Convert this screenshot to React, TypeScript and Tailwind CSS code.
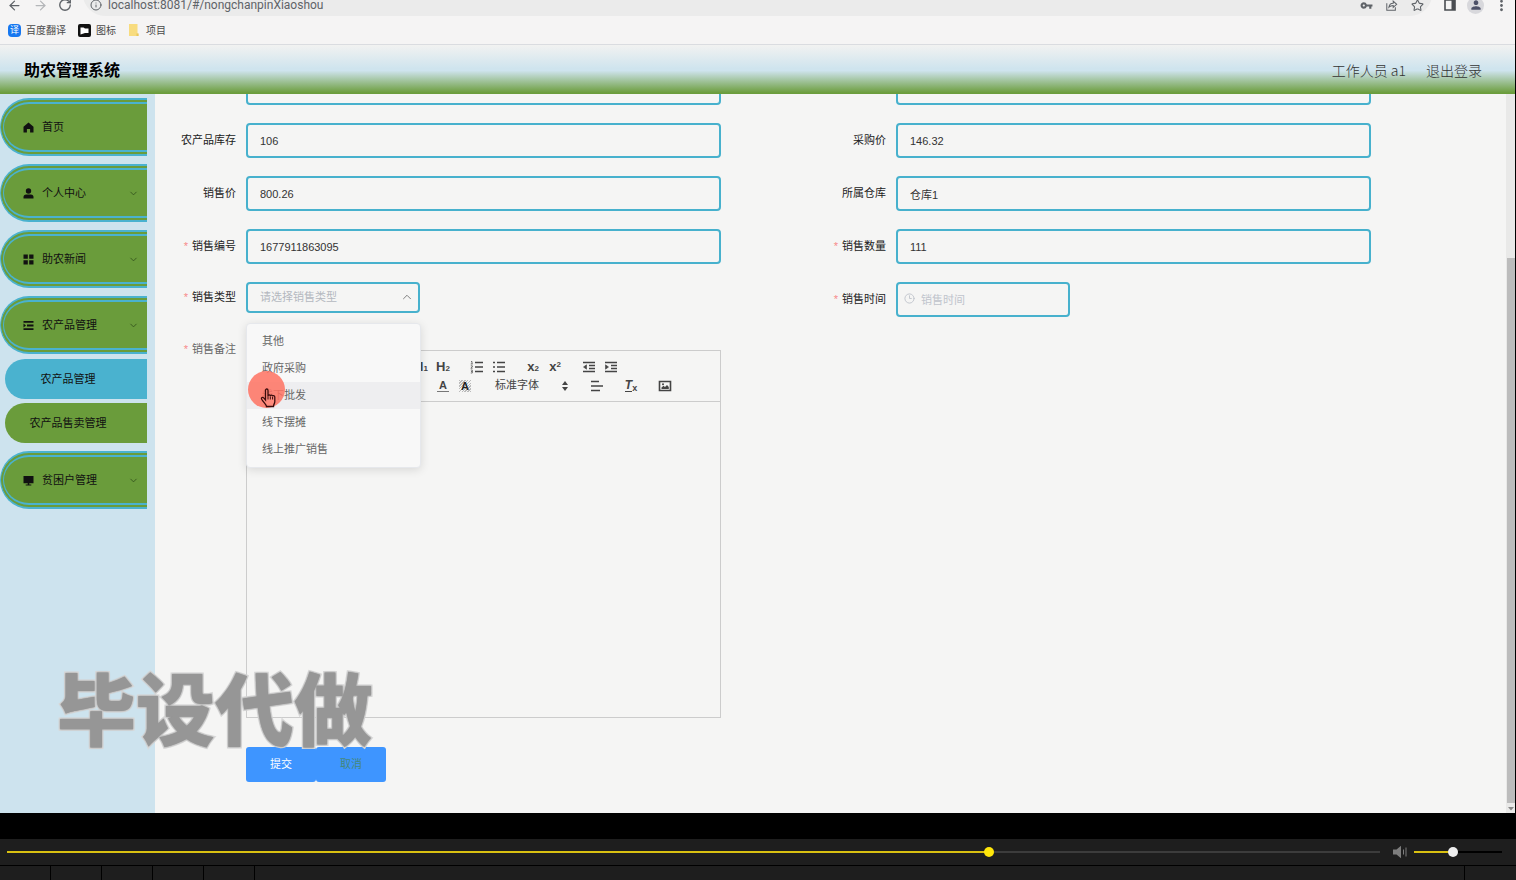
import { useState } from 'react'
import type { ReactNode } from 'react'
import { ArrowLeft, ArrowRight, ChevronDown, ChevronUp, Clock3, Info, RotateCw, Star } from 'lucide-react'
import { MdMoreVert, MdPerson, MdVpnKey } from 'react-icons/md'

const saleTypes = ['其他', '政府采购', '线下批发', '线下摆摊', '线上推广销售']

const inputClass =
  'h-[35px] w-full min-w-0 rounded border-2 border-[#47b1cd] bg-transparent px-3 text-[11px] text-[#333] outline-none placeholder:text-[#c0c4cc]'

function BrowserBar() {
  return (
    <div className="border-b border-[#dadce0] bg-[#f5f4f4] text-[#5f6368]">
      <div className="-mt-[6px] flex h-[22px] items-center">
        <button aria-label="后退" className="ml-[7px]" type="button">
          <ArrowLeft size={15} />
        </button>
        <button aria-label="前进" className="ml-[11px] text-[#b4b6b9]" type="button">
          <ArrowRight size={15} />
        </button>
        <button aria-label="刷新" className="ml-[10px]" type="button">
          <RotateCw size={14} strokeWidth={2.4} />
        </button>
        <div className="ml-[11px] flex h-[22px] flex-1 items-center rounded-b-full bg-[#ebebeb] pr-2 pl-[7px]">
          <Info size={12} />
          <input
            aria-label="地址"
            className="ml-[6px] min-w-0 flex-1 bg-transparent font-[Roboto,sans-serif] text-[12px] outline-none"
            defaultValue="localhost:8081/#/nongchanpinXiaoshou"
          />
          <MdVpnKey className="mr-3" size={13} />
          <svg className="mr-[13px]" fill="none" height="12" stroke="currentColor" strokeWidth="1.2" viewBox="0 0 14 14" width="13">
            <path d="M1.500 5v8h10V9.500M4 9.500c.5-3 2-4.500 5-4.500V2.500l4 3.700-4 3.500V7.500c-2 0-3.500.5-5 2z" />
          </svg>
          <Star size={13} />
        </div>
        <svg className="ml-3 text-[#4a4d51]" height="12" viewBox="0 0 12 12" width="12">
          <path d="M1 1h10v10H1z" fill="none" stroke="currentColor" strokeWidth="1.600" />
          <path d="M7.500 1H11v10H7.500z" fill="currentColor" />
        </svg>
        <span className="ml-[11px] grid size-[17px] place-items-center rounded-full bg-[#d8d8dc] text-[#4d5168]">
          <MdPerson size={14} />
        </span>
        <MdMoreVert className="mr-[5px] ml-[9px]" size={17} />
      </div>
      <div className="flex h-7 items-center px-2 text-[10px] text-[#4a4a4a]">
        <span className="grid size-[13px] place-items-center rounded-sm bg-[#1677f0] text-[9px] leading-none text-white">译</span>
        <a className="ml-[5px]" href="#fanyi">
          百度翻译
        </a>
        <svg className="ml-3" height="13" viewBox="0 0 13 13" width="13">
          <rect fill="#111" height="13" rx="2" width="13" />
          <path d="M2.500 3.500h3l1.500 1h3.500V9H7l-4.500 1.500z" fill="#fff" />
        </svg>
        <a className="ml-[5px]" href="#tubiao">
          图标
        </a>
        <svg className="ml-3" height="12" viewBox="0 0 11 12" width="11">
          <path d="M1 0h8.500v9.500h1V12H1z" fill="#f8dc7f" />
          <path d="M8.500 9.500h2V12h-2z" fill="#e9c65d" />
        </svg>
        <a className="ml-[7px]" href="#xiangmu">
          项目
        </a>
      </div>
    </div>
  )
}

function MenuIcon({ name }: { name: string }) {
  return (
    <svg className="shrink-0" fill="currentColor" height="11" viewBox="0 0 11 11" width="11">
      {name === 'home' && <path d="M5.500.5L.5 4.800V10.500h3.400V7h3.200v3.500h3.400V4.800z" />}
      {name === 'user' && (
        <>
          <circle cx="5.500" cy="3" r="2.700" />
          <path d="M.5 10.500V9c0-1.600 1-2.600 2.600-2.600h4.800c1.600 0 2.600 1 2.600 2.600v1.500z" />
        </>
      )}
      {name === 'grid' && <path d="M.5.5h4.300v4.300H.5zM6.200.5h4.300v4.300H6.200zM.5 6.200h4.300v4.300H.5zM6.200 6.200h4.300v4.300H6.200z" />}
      {name === 'list' && <path d="M.5 1h10v1.800H.5zM4 4.600h6.500v1.800H4zM.5 8.200h10V10H.5zM.5 3.500l2.500 2-2.500 2z" />}
      {name === 'screen' && <path d="M.5 1h10v7.200H6.300v1.300h2v1H2.700v-1h2V8.200H.5z" />}
    </svg>
  )
}

function MenuItem({ icon, label, arrow = true }: { icon: string; label: string; arrow?: boolean }) {
  return (
    <button
      className="mb-2 flex h-[58px] w-full items-center rounded-l-[29px] border-y-6 border-l-4 border-double border-[#4ab2cf] bg-[#6a9c3b] pr-2 pl-[19px] text-left text-[11px] text-[#111]"
      type="button"
    >
      <MenuIcon name={icon} />
      <span className="ml-2 flex-1">{label}</span>
      {arrow && <ChevronDown className="text-[#31501b]" size={11} strokeWidth={1.8} />}
    </button>
  )
}

function Sidebar() {
  return (
    <nav className="w-[155px] shrink-0 bg-[#cde3ee] pt-1 pr-2">
      <MenuItem arrow={false} icon="home" label="首页" />
      <MenuItem icon="user" label="个人中心" />
      <MenuItem icon="grid" label="助农新闻" />
      <MenuItem icon="list" label="农产品管理" />
      <div className="-mt-[3px] mb-2 flex flex-col gap-1 pl-[5px] text-[11px] text-[#111]">
        <a className="grid h-10 place-items-center rounded-l-[20px] bg-[#4ab2cf] pr-4" href="#nongchanpin">
          农产品管理
        </a>
        <a className="grid h-10 place-items-center rounded-l-[20px] bg-[#6a9c3b] pr-4" href="#shoumai">
          农产品售卖管理
        </a>
      </div>
      <MenuItem icon="screen" label="贫困户管理" />
    </nav>
  )
}

interface FieldProps {
  id: string
  label: string
  required?: boolean
  children: ReactNode
}

function Field({ id, label, required, children }: FieldProps) {
  return (
    <div className="flex items-center pr-[85px]">
      <label className="w-20 shrink-0 text-right text-[11px] text-[#222]" htmlFor={id}>
        {required && <span className="mr-1 text-[#f78989]">*</span>}
        {label}
      </label>
      <div className="ml-[10px] min-w-0 flex-1">{children}</div>
    </div>
  )
}

function TextField({ id, label, value, required }: { id: string; label: string; value: string; required?: boolean }) {
  return (
    <Field id={id} label={label} required={required}>
      <input className={inputClass} defaultValue={value} id={id} />
    </Field>
  )
}

function SaleTypeSelect() {
  const [value, setValue] = useState('')

  return (
    <div className="relative w-[174px]">
      <select
        className="block h-[31px] w-full appearance-none rounded border-2 border-[#47b1cd] bg-transparent px-3 text-[11px] text-[#b4b8bf] outline-none"
        id="type"
        onChange={(e) => setValue(e.target.value)}
        value={value}
      >
        <option value="">请选择销售类型</option>
        {saleTypes.map((type) => (
          <option key={type}>{type}</option>
        ))}
      </select>
      <ChevronUp className="pointer-events-none absolute top-2 right-[6px] text-[#777]" size={14} strokeWidth={1.6} />
      <ul className="absolute top-[41px] left-0 z-10 w-[175px] rounded border border-[#e6e8ec] bg-[#f8f8f8] py-1 text-[11px] text-[#666] shadow-[0_2px_10px_rgba(0,0,0,0.12)]">
        {saleTypes.map((type, index) => (
          <li key={type}>
            <button
              className={`block h-[27px] w-full px-[15px] text-left ${index === 2 ? 'bg-[#eeeef0]' : ''}`}
              onClick={() => setValue(type)}
              type="button"
            >
              {type}
            </button>
          </li>
        ))}
      </ul>
      {/* click highlight and hand pointer */}
      <span className="pointer-events-none absolute top-[89px] left-[2px] z-20 size-[37px] rounded-full bg-[#ff7262]/85" />
      <svg className="pointer-events-none absolute top-[106px] left-[14px] z-20" height="20" viewBox="0 0 17 20" width="17">
        <path
          d="M5.500 12V2.500c0-2 2.500-2 2.500 0V8c0-1.500 2.300-1.400 2.300.2 0-1.500 2.300-1.300 2.300.3 0-1.300 2.200-1 2.200.5v4.500c0 2-1.300 2.800-1.300 5H6.500c0-2-3-4-4.800-7.300-.9-1.800 1-2.400 2-1.300z"
          fill="#ff8b7d"
          stroke="#3a0c0c"
          strokeWidth="1.300"
        />
        <path d="M8 8v3.500M10.300 8.500v3M12.600 9v2.500" stroke="#3a0c0c" />
      </svg>
    </div>
  )
}

function Tool({ label, children }: { label: string; children: ReactNode }) {
  return (
    <button aria-label={label} className="grid h-[19px] w-[22px] place-items-center leading-none" type="button">
      {children}
    </button>
  )
}

function Glyph({ d, children }: { d: string; children?: ReactNode }) {
  return (
    <svg fill="none" height="14" stroke="currentColor" strokeWidth="1.600" viewBox="0 0 14 14" width="14">
      <path d={d} />
      {children}
    </svg>
  )
}

function Letter({ base, mark, up }: { base: string; mark: string; up?: boolean }) {
  return (
    <span className="flex text-[13px] leading-3 font-bold">
      {base}
      <span className={`text-[8px] leading-2 ${up ? 'self-start' : 'self-end'}`}>{mark}</span>
    </span>
  )
}

function PickerArrows() {
  return (
    <svg className="ml-auto" fill="currentColor" height="10" viewBox="0 0 8 10" width="8">
      <path d="M4 0l3 4H1zM4 10l3-4H1z" />
    </svg>
  )
}

function Editor() {
  return (
    <div className="mt-[15px] border border-[#ccc]">
      <div className="border-b border-[#ccc] px-[7px] pt-[6px] pb-[6px] font-['Liberation_Sans','Noto_Sans_CJK_SC',sans-serif] text-[#444]">
        <div className="flex gap-3">
          <div className="flex">
            <Tool label="粗体">
              <Glyph d="M4 2h3.500a2.500 2.500 0 010 5H4zM4 7h4.500a2.500 2.500 0 010 5H4z" />
            </Tool>
            <Tool label="斜体">
              <Glyph d="M6 2h5M3 12h5M8.500 2l-3 10" />
            </Tool>
            <Tool label="下划线">
              <Glyph d="M4 1v5a3 3 0 006 0V1M2 13h10" />
            </Tool>
            <Tool label="删除线">
              <Glyph d="M1 7h12M10 3c-3-2-6 0-5 2M4 11c3 2 6 0 6-2" />
            </Tool>
          </div>
          <div className="flex">
            <Tool label="引用">
              <Glyph d="M2 4h3v4H2zM8 4h3v4H8z" />
            </Tool>
            <Tool label="代码">
              <Glyph d="M4 3L1 7l3 4M10 3l3 4-3 4" />
            </Tool>
          </div>
          <div className="flex">
            <Tool label="标题 1">
              <Letter base="H" mark="1" />
            </Tool>
            <Tool label="标题 2">
              <Letter base="H" mark="2" />
            </Tool>
          </div>
          <div className="flex">
            <Tool label="有序列表">
              <Glyph d="M5 2.500h8M5 7h8M5 11.500h8">
                <path d="M1 1.500h1v2.500M.7 4h2M.8 5.800h1.500v1.200l-1.500 1.200h1.800M.8 10h1.500v3H.8M1 11.500h1.300" strokeWidth=".7" />
              </Glyph>
            </Tool>
            <Tool label="无序列表">
              <Glyph d="M5 2.500h8M5 7h8M5 11.500h8M1 2.500h2M1 7h2M1 11.500h2" />
            </Tool>
          </div>
          <div className="flex">
            <Tool label="下标">
              <Letter base="x" mark="2" />
            </Tool>
            <Tool label="上标">
              <Letter base="x" mark="2" up />
            </Tool>
          </div>
          <div className="flex">
            <Tool label="减少缩进">
              <Glyph d="M1 2.500h12M7 5.500h6M7 8.500h6M1 11.500h12">
                <path d="M4.500 4.800v4.400L1.500 7z" fill="currentColor" strokeWidth=".6" />
              </Glyph>
            </Tool>
            <Tool label="增加缩进">
              <Glyph d="M1 2.500h12M7 5.500h6M7 8.500h6M1 11.500h12">
                <path d="M1.500 4.800v4.400l3-2.200z" fill="currentColor" strokeWidth=".6" />
              </Glyph>
            </Tool>
          </div>
        </div>
        <div className="flex gap-3">
          <button aria-label="字号" className="flex w-[77px] items-center" type="button">
            <PickerArrows />
          </button>
          <button aria-label="标题" className="flex w-[77px] items-center" type="button">
            <PickerArrows />
          </button>
          <div className="flex">
            <Tool label="文字颜色">
              <span className="w-3 border-b border-[#777] text-center text-[11px] leading-[11px] font-bold">A</span>
            </Tool>
            <Tool label="背景颜色">
              <span className="w-3 bg-[repeating-linear-gradient(135deg,#bbb_0_1px,transparent_1px_2px)] text-center text-[11px] leading-3 font-bold text-[#222]">
                A
              </span>
            </Tool>
          </div>
          <button className="flex w-[86px] items-center pr-[5px] pl-[7px] text-[11px] leading-[19px]" type="button">
            标准字体
            <PickerArrows />
          </button>
          <Tool label="对齐">
            <Glyph d="M1 2.500h8M1 7h12M1 11.500h9" />
          </Tool>
          <Tool label="清除格式">
            <span className="flex text-[12px] leading-3 font-bold">
              <span className="border-b border-[#444] italic">T</span>
              <span className="self-end text-[9px] leading-2">x</span>
            </span>
          </Tool>
          <Tool label="图片">
            <Glyph d="M1.500 2.500h11v9h-11z">
              <path d="M3.500 10V8.500l2-1.700L7 8l2-2 1.800 2v2z" fill="currentColor" stroke="none" />
              <circle cx="5" cy="5.300" fill="currentColor" r="1" stroke="none" />
            </Glyph>
          </Tool>
        </div>
      </div>
      <textarea
        aria-label="销售备注"
        className="block h-[315px] w-full resize-none bg-transparent p-3 text-[11px] outline-none"
        id="remark"
      />
    </div>
  )
}

function SaleForm() {
  return (
    <form className="min-w-0 flex-1 overflow-hidden pr-[50px] pl-px" onSubmit={(e) => e.preventDefault()}>
      {/* the pane is scrolled, so the first row shows only its lower edge */}
      <div className="-mt-6 grid grid-cols-2 items-start gap-y-[18px]">
        <TextField id="name" label="" value="" />
        <TextField id="category" label="" value="" />
        <TextField id="stock" label="农产品库存" value="106" />
        <TextField id="buyPrice" label="采购价" value="146.32" />
        <TextField id="salePrice" label="销售价" value="800.26" />
        <TextField id="warehouse" label="所属仓库" value="仓库1" />
        <TextField id="number" label="销售编号" required value="1677911863095" />
        <TextField id="amount" label="销售数量" required value="111" />
        <Field id="type" label="销售类型" required>
          <SaleTypeSelect />
        </Field>
        <Field id="time" label="销售时间" required>
          <div className="relative w-[174px]">
            <Clock3 className="absolute top-[11px] left-2 text-[#c0c4cc]" size={11} />
            <input
              className="block h-[35px] w-full rounded border-2 border-[#47b1cd] bg-transparent pr-3 pl-[23px] text-[11px] outline-none placeholder:text-[#c0c4cc]"
              id="time"
              placeholder="销售时间"
            />
          </div>
        </Field>
        <div className="flex items-start pr-[85px]">
          <label className="w-20 shrink-0 text-right text-[11px] leading-7 text-[#666]" htmlFor="remark">
            <span className="mr-1 text-[#f78989]">*</span>
            销售备注
          </label>
          <div className="ml-[10px] min-w-0 flex-1">
            <Editor />
            <div className="mt-[29px] flex text-[11px]">
              <button className="h-[35px] w-[70px] rounded-[3px] bg-[#3e95ff] text-white" type="submit">
                提交
              </button>
              <button className="h-[35px] w-[70px] rounded-[3px] bg-[#3e95ff] text-[#45887c]" type="button">
                取消
              </button>
            </div>
          </div>
        </div>
      </div>
    </form>
  )
}

function Player() {
  return (
    <footer className="bg-black pt-[26px]">
      <div className="flex h-[26px] items-center bg-[#1e1e1e] pr-[14px] pb-px pl-[7px]">
        <input
          aria-label="播放进度"
          className="h-3 min-w-0 flex-1 appearance-none [background:linear-gradient(#d9c011,#d9c011)_0_50%/71.5%_2px_no-repeat,linear-gradient(#3c3c3c,#3c3c3c)_0_50%/100%_2px_no-repeat] [&::-webkit-slider-thumb]:size-[10px] [&::-webkit-slider-thumb]:appearance-none [&::-webkit-slider-thumb]:rounded-full [&::-webkit-slider-thumb]:bg-[#ffe60a]"
          defaultValue={717}
          max={1000}
          type="range"
        />
        <svg className="mr-[7px] ml-3" height="14" viewBox="0 0 15 14" width="15">
          <path d="M1 4.500h3.500L9 .8v12.400L4.500 9.500H1z" fill="#7d7d7d" />
          <path d="M11.500 4.500v5M14 2.500v9" stroke="#7d7d7d" />
        </svg>
        <input
          aria-label="音量"
          className="h-3 w-[88px] appearance-none [background:linear-gradient(#d9c011,#d9c011)_0_50%/44%_2px_no-repeat,linear-gradient(#000,#000)_0_50%/100%_2px_no-repeat] [&::-webkit-slider-thumb]:size-[10px] [&::-webkit-slider-thumb]:appearance-none [&::-webkit-slider-thumb]:rounded-full [&::-webkit-slider-thumb]:bg-[#eee]"
          defaultValue={44}
          type="range"
        />
      </div>
      <div className="mt-px flex h-[14px] divide-x divide-black bg-[#1e1e1e]">
        <span className="w-[51px]" />
        <span className="w-[51px]" />
        <span className="w-[51px]" />
        <span className="w-[51px]" />
        <span className="w-[51px]" />
        <span className="flex-1" />
        <span className="w-[51px]" />
      </div>
    </footer>
  )
}

export default function App() {
  return (
    <div className="relative flex h-screen min-h-[600px] flex-col overflow-hidden bg-black font-['Liberation_Sans','Noto_Sans_CJK_SC',sans-serif]">
      <div className="flex min-h-0 flex-1 flex-col pr-px">
        <BrowserBar />
        <header className="flex h-[49px] shrink-0 items-center justify-between bg-[linear-gradient(#f2f2f1_0%,#cfe4ee_48%,#cfe4ee_52%,#6b9d3c_98%)] pr-[33px] pl-6">
          <h1 className="pt-[2px] text-base font-bold text-black">助农管理系统</h1>
          <div className="flex gap-5 font-['Noto_Sans_CJK_SC',sans-serif] text-sm font-light text-[#333]">
            <span>工作人员 a1</span>
            <a href="#logout">退出登录</a>
          </div>
        </header>
        <div className="flex min-h-0 flex-1 bg-[#f5f5f4]">
          <Sidebar />
          <SaleForm />
          <div className="flex w-[9px] shrink-0 flex-col bg-[#e9e9e8]">
            <div className="flex-[164]" />
            <div className="ml-px flex-[545] bg-[#bcbcbc]" />
            <svg className="h-[10px] w-[9px]" viewBox="0 0 9 10">
              <path d="M2 4h6L5 7.500z" fill="#888" />
            </svg>
          </div>
        </div>
      </div>
      <Player />
      <p className="pointer-events-none absolute bottom-[136px] left-[57px] z-30 font-['Noto_Sans_CJK_SC',sans-serif] text-[79px] leading-[76px] font-black text-[#969696] [paint-order:stroke_fill] [-webkit-text-stroke:3px_#dadada] [text-shadow:0_0_2px_#888]">
        毕设代做
      </p>
    </div>
  )
}
